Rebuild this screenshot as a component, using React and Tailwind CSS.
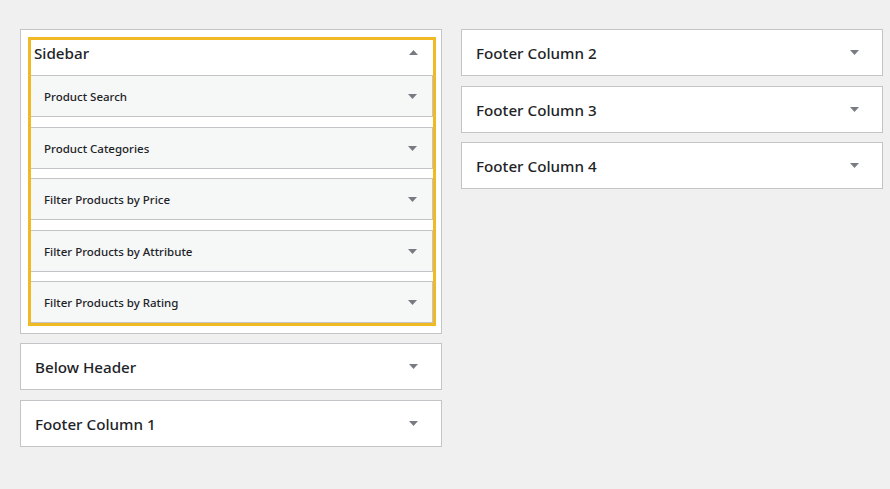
import React from "react";

const font = { fontFamily: '"Noto Sans", "Open Sans", sans-serif' };

function Arrow({ up = false }) {
  return (
    <svg width="9" height="5" viewBox="0 0 9 5" className="shrink-0">
      {up ? (
        <polygon points="0,5 9,5 4.5,0" fill="#787c82" />
      ) : (
        <polygon points="0,0 9,0 4.5,5" fill="#787c82" />
      )}
    </svg>
  );
}

function Box({ title, className = "" }) {
  return (
    <div
      className={`h-[47px] w-[422px] border border-[#c3c4c7] bg-white flex items-center justify-between pl-[14px] pr-[23px] ${className}`}
    >
      <span className="text-[15.2px] font-medium text-[#1d2327] leading-none pt-[3px]">{title}</span>
      <Arrow />
    </div>
  );
}

function Widget({ title, className = "" }) {
  return (
    <div
      className={`h-[42px] border-y border-r border-[#c3c4c7] bg-[#f6f7f7] flex items-center justify-between pl-[13px] pr-[15px] ${className}`}
    >
      <span className="text-[11.5px] font-medium text-[#1d2327] leading-none pt-[1px]">{title}</span>
      <Arrow />
    </div>
  );
}

export default function App() {
  return (
    <div className="w-[890px] h-[489px] bg-[#f0f0f1] overflow-hidden" style={font}>
      <div className="flex gap-[19px] pl-[20px] pt-[29px]">
        <div className="flex flex-col w-[422px]">
          <div className="w-[422px] border border-[#c3c4c7] bg-white pt-[7px] pb-[7px] pl-[7px] pr-[5px]">
            <div className="border-[3px] border-[#f1b924] bg-white">
              <div className="h-[35px] pb-[10px] pl-[3px] pr-[15px] flex items-center justify-between">
                <span className="text-[15.2px] font-medium text-[#1d2327] leading-none pt-[3px]">Sidebar</span>
                <Arrow up />
              </div>
              <Widget title="Product Search" />
              <Widget title="Product Categories" className="mt-[10px]" />
              <Widget title="Filter Products by Price" className="mt-[9px]" />
              <Widget title="Filter Products by Attribute" className="mt-[10px]" />
              <Widget title="Filter Products by Rating" className="mt-[9px]" />
            </div>
          </div>
          <Box title="Below Header" className="mt-[9px]" />
          <Box title="Footer Column 1" className="mt-[10px]" />
        </div>
        <div className="flex flex-col w-[422px]">
          <Box title="Footer Column 2" />
          <Box title="Footer Column 3" className="mt-[10px]" />
          <Box title="Footer Column 4" className="mt-[9px]" />
        </div>
      </div>
    </div>
  );
}
